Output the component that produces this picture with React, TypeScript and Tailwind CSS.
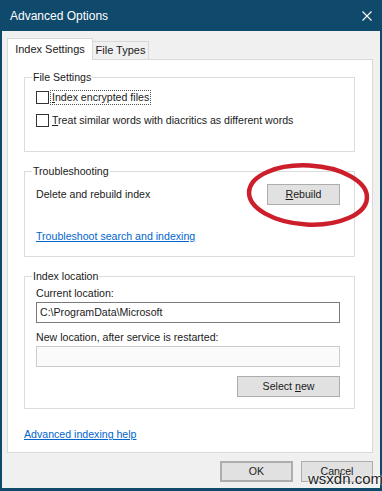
import { ReactNode } from 'react'

const font = { fontFamily: '"Liberation Sans", Arial, sans-serif' }

function GroupBox({ title, className, children }: { title: string; className: string; children: ReactNode }) {
  return (
    <div className={`relative border border-[#dcdcdc] ${className}`}>
      <span className="absolute -top-[8px] left-[7px] bg-white px-[1px] text-[10.6px] leading-[14px] text-[#1a1a1a]">
        {title}
      </span>
      {children}
    </div>
  )
}

function CheckRow({ label, focused }: { label: ReactNode; focused?: boolean }) {
  return (
    <div className="flex items-center gap-[2px] h-[14px]">
      <span className="w-[13px] h-[13px] border border-[#333] bg-white flex-shrink-0" />
      <span className={`px-[1px] leading-[13px] ${focused ? 'outline outline-1 outline-dotted outline-[#555]' : ''}`}>
        {label}
      </span>
    </div>
  )
}

function WinButton({ children, className }: { children: ReactNode; className: string }) {
  return (
    <div className={`flex items-center justify-center bg-[#e1e1e1] border border-[#adadad] text-[10.6px] text-[#1a1a1a] ${className}`}>
      {children}
    </div>
  )
}

export default function App() {
  return (
    <div className="w-[382px] h-[491px] bg-[#0f4a6d] flex flex-col text-[10.6px] text-[#1a1a1a]" style={font}>
      {/* title bar */}
      <div className="h-[31px] flex items-center justify-between pl-[10px] pr-[10px] flex-shrink-0">
        <span className="text-white text-[12px]">Advanced Options</span>
        <svg className="w-[10px] h-[10px]" viewBox="0 0 10 10" fill="none" stroke="white" strokeWidth={1.1}>
          <path d="M0.5 0.5l9 9M9.5 0.5l-9 9" />
        </svg>
      </div>

      {/* client area */}
      <div className="flex-1 ml-[2px] mr-[2px] mb-[3px] bg-[#f0f0f0] flex flex-col pl-[5px] pr-[7px]">
        {/* tabs */}
        <div className="flex items-end h-[28px] pt-[7px] flex-shrink-0">
          <div className="h-[22px] w-[86px] bg-white border border-[#d9d9d9] border-b-0 flex items-center justify-center text-[11px] relative z-10 -mb-[1px]">
            Index Settings
          </div>
          <div className="h-[18px] w-[56px] bg-[#f0f0f0] border border-[#d9d9d9] border-b-0 border-l-0 flex items-center justify-center text-[11px]">
            File Types
          </div>
        </div>

        {/* tab panel */}
        <div className="h-[394px] bg-white border border-[#d9d9d9] pl-[16px] pr-[17px] pt-[17px] flex flex-col flex-shrink-0">
          <GroupBox title="File Settings" className="h-[75px] pt-[12px] pl-[11px] flex flex-col gap-[9px]">
            <CheckRow
              focused
              label={
                <>
                  <span className="underline">I</span>ndex encrypted files
                </>
              }
            />
            <CheckRow
              label={
                <>
                  <span className="underline">T</span>reat similar words with diacritics as different words
                </>
              }
            />
          </GroupBox>

          <GroupBox title="Troubleshooting" className="mt-[19px] h-[86px] pl-[11px] pr-[14px] pt-[12px]">
            <div className="flex items-center justify-between">
              <span>Delete and rebuild index</span>
              <WinButton className="w-[73px] h-[21px]">
                <span>
                  <span className="underline">R</span>ebuild
                </span>
              </WinButton>
            </div>
            <div className="mt-[24px] text-[#0066cc] underline">Troubleshoot search and indexing</div>
            {/* red marker ellipse */}
            <svg className="absolute left-[219px] -top-[10px] w-[130px] h-[66px] max-w-none overflow-visible" viewBox="0 0 130 66" fill="none">
              <ellipse cx="64" cy="33" rx="59" ry="29.5" stroke="#cc1f2b" strokeWidth={4.5} transform="rotate(3 64 33)" />
            </svg>
          </GroupBox>

          <GroupBox title="Index location" className="mt-[19px] h-[133px] pl-[11px] pr-[14px] pt-[9px] flex flex-col">
            <span className="leading-[14px]">Current location:</span>
            <div className="mt-[2px] h-[21px] border border-[#7a7a7a] flex items-center px-[3px]">C:\ProgramData\Microsoft</div>
            <span className="mt-[7px] leading-[14px]">New location, after service is restarted:</span>
            <div className="mt-[2px] h-[21px] border border-[#cccccc] bg-[#fafafa]" />
            <div className="flex justify-end mt-[9px]">
              <WinButton className="w-[103px] h-[21px]">
                <span>
                  Select <span className="underline">n</span>ew
                </span>
              </WinButton>
            </div>
          </GroupBox>

          <div className="mt-[18px] text-[#0066cc] underline">Advanced indexing help</div>
        </div>

        {/* dialog buttons */}
        <div className="flex justify-end gap-[8px] mt-[8px]">
          <WinButton className="w-[73px] h-[21px] border-2 border-[#3d7bad]">OK</WinButton>
          <div className="relative">
            <WinButton className="w-[72px] h-[21px]">Cancel</WinButton>
            <span
              className="absolute left-[7px] top-[10px] text-[15px] text-[#222] leading-[16px] whitespace-nowrap"
              style={{ textShadow: '0 0 2px #fff, 0 0 2px #fff' }}
            >
              wsxdn.com
            </span>
          </div>
        </div>
      </div>
    </div>
  )
}
